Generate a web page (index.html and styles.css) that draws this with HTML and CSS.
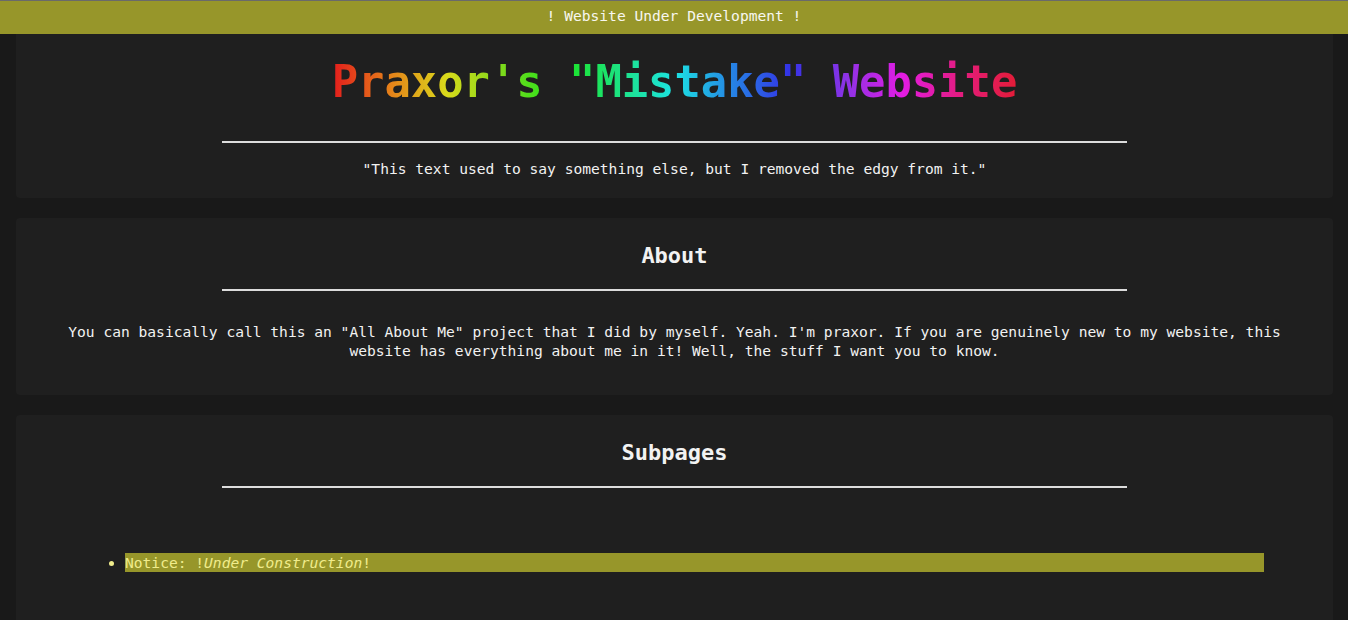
FILE: index.html
```html
<!DOCTYPE html>
<html lang="en">
<head>
<meta charset="utf-8">
<title>Praxor's "Mistake" Website</title>
<link rel="stylesheet" href="styles.css">
</head>
<body>
<div class="banner">! Website Under Development !</div>
<main class="page">
  <section class="panel panel-head">
    <h1 class="title"><span class="rainbow">Praxor's "Mistake" Website</span></h1>
    <div class="rule"></div>
    <p class="quote">"This text used to say something else, but I removed the edgy from it."</p>
  </section>
  <section class="panel">
    <h2 class="heading">About</h2>
    <div class="rule"></div>
    <p class="text">You can basically call this an "All About Me" project that I did by myself. Yeah. I'm praxor. If you are genuinely new to my website, this website has everything about me in it! Well, the stuff I want you to know.</p>
  </section>
  <section class="panel panel-last">
    <h2 class="heading">Subpages</h2>
    <div class="rule"></div>
    <ul class="pages">
      <li class="notice">Notice: !<em>Under Construction</em>!</li>
    </ul>
  </section>
</main>
</body>
</html>
```
FILE: styles.css
```css
html, body {
  margin: 0;
  padding: 0;
}
body {
  background: #191919;
  color: #f2f2f2;
  font-family: "DejaVu Sans Mono", "Liberation Mono", monospace;
  font-size: 14.6px;
  line-height: 19px;
}
.banner {
  height: 33px;
  border-top: 1px solid #6a6a6a;
  background: #97962a;
  color: #f7f7f0;
  font-size: 14.6px;
  line-height: 29px;
  text-align: center;
}
.page {
  display: flex;
  flex-direction: column;
  gap: 20px;
  padding: 0 15px 0 16px;
}
.panel {
  background: #1f1f1f;
  border-radius: 4px;
  padding: 25px 24px 35px;
  text-align: center;
}
.panel-head {
  padding-top: 22px;
  padding-bottom: 20px;
  border-radius: 0 0 4px 4px;
}
.title {
  margin: 0;
  font-size: 43.8px;
  line-height: 51px;
  font-weight: bold;
}
.rainbow {
  display: inline-block;
  background: linear-gradient(90deg,
    hsl(0 78% 50%) 0%,
    hsl(30 80% 50%) 8.3%,
    hsl(60 78% 48%) 16.7%,
    hsl(90 78% 48%) 25%,
    hsl(120 78% 50%) 33.3%,
    hsl(150 78% 50%) 41.7%,
    hsl(180 78% 50%) 50%,
    hsl(210 78% 52%) 58.3%,
    hsl(240 78% 55%) 66.7%,
    hsl(270 78% 55%) 75%,
    hsl(300 78% 50%) 83.3%,
    hsl(330 78% 50%) 91.7%,
    hsl(352 78% 50%) 100%);
  -webkit-background-clip: text;
  background-clip: text;
  color: transparent;
}
.rule {
  width: 905px;
  height: 2px;
  margin: 34px auto 0;
  background: #dcdcdc;
}
.quote {
  margin: 16px 0 0;
}
.heading {
  margin: 0;
  font-size: 22px;
  line-height: 26px;
  font-weight: bold;
}
.heading + .rule {
  margin-top: 20px;
}
.text {
  margin: 31px 0 0;
}
.panel-last {
  padding-bottom: 60px;
}
.pages {
  margin: 65px 0 0;
  padding: 0 45px 0 85px;
  text-align: left;
  color: #f0ec8c;
}
.notice {
  background: #97962a;
  line-height: 19px;
}
.notice em {
  font-style: italic;
}
```
